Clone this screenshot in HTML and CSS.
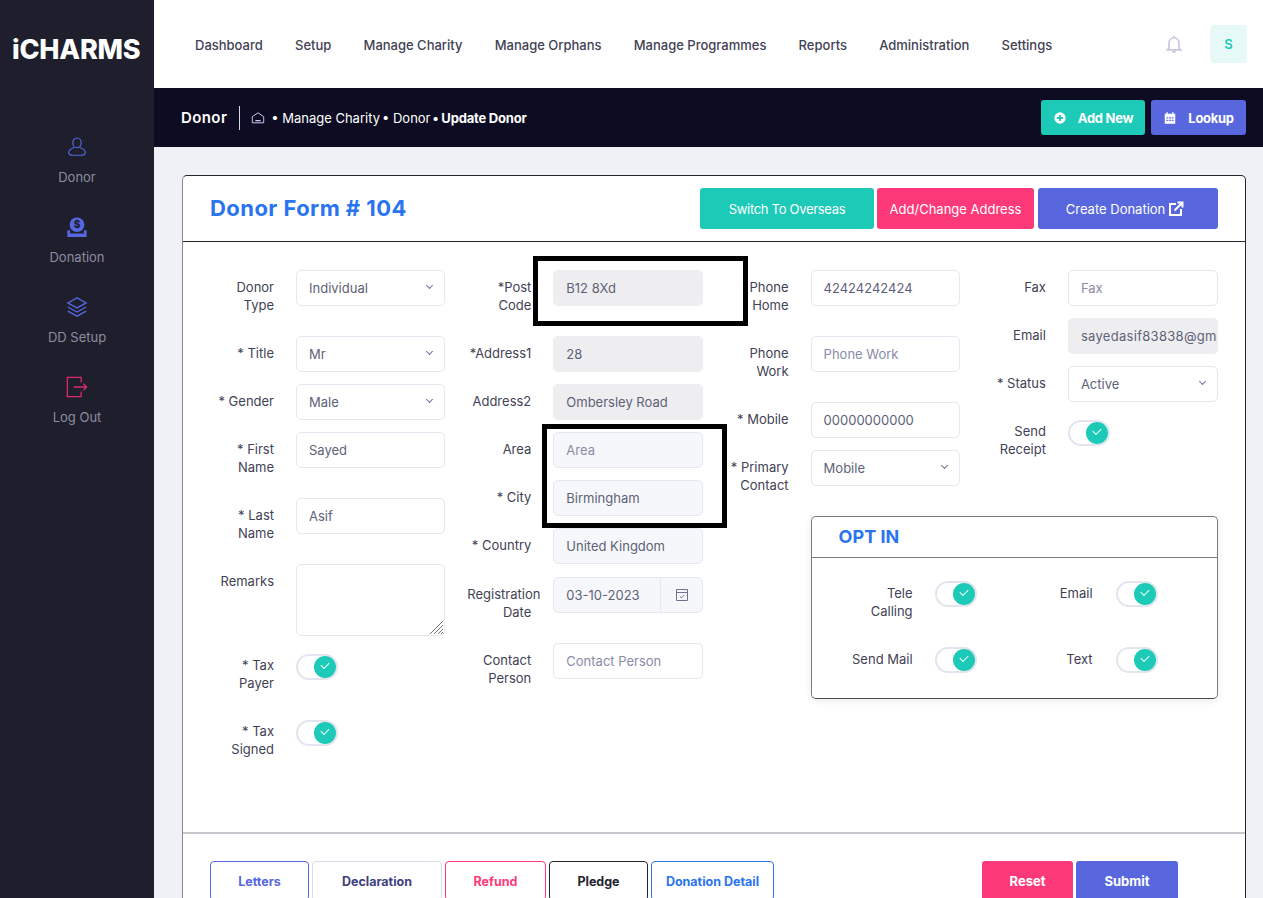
FILE: index.html
```html
<!DOCTYPE html>
<html lang="en">
<head>
  <meta charset="UTF-8" />
  <meta name="viewport" content="width=device-width, initial-scale=1.0" />
  <title>Donor Form</title>
  <link rel="stylesheet" href="styles.css">
</head>
<body>
  <aside class="sidebar">
    <div class="logo">iCHARMS</div>
    <nav class="side-nav">
      <a class="side-item">
        <svg class="side-icon" viewBox="0 0 24 24" fill="none" stroke="#5468e0" stroke-width="1.3"><ellipse cx="12" cy="7.5" rx="4.6" ry="5.3"/><path d="M8.6 12.5C5 14 3 15.6 3 18c0 2.2 2.5 3 4.5 3h9c2 0 4.5-.8 4.5-3 0-2.4-2-4-5.600-5.500"/></svg>
        <span>Donor</span>
      </a>
      <a class="side-item">
        <svg class="side-icon" viewBox="0 0 24 24"><circle cx="12" cy="9.500" r="8" fill="#5468e0"/><path d="M1.500 15.500h3v3.500h15v-3.500h3V23h-21z" fill="#5468e0"/><text x="12" y="13.500" text-anchor="middle" class="dollar">$</text></svg>
        <span>Donation</span>
      </a>
      <a class="side-item">
        <svg class="side-icon" viewBox="0 0 24 24" fill="none" stroke="#5468e0" stroke-width="1.400"><path d="M12 2l10 5.500-10 5.500L2 7.500z"/><path d="M2 12l10 5.500L22 12"/><path d="M2 16.500L12 22l10-5.500"/></svg>
        <span>DD Setup</span>
      </a>
      <a class="side-item">
        <svg class="side-icon" viewBox="0 0 24 24" fill="none" stroke="#d92d6b" stroke-width="1.400"><path d="M16.500 7V1.500H1.500v21h15V17"/><path d="M8.500 12h14M19 8.500l3.500 3.500-3.500 3.500"/></svg>
        <span>Log Out</span>
      </a>
    </nav>
  </aside>

  <div class="page">
    <header class="topbar">
      <nav class="top-nav">
        <a>Dashboard</a>
        <a>Setup</a>
        <a>Manage Charity</a>
        <a>Manage Orphans</a>
        <a>Manage Programmes</a>
        <a>Reports</a>
        <a>Administration</a>
        <a>Settings</a>
      </nav>
      <div class="top-right">
        <svg class="bell" viewBox="0 0 24 24" fill="none" stroke="#c8c8e0" stroke-width="2"><path d="M6 17V10.500a6 6 0 0 1 12 0V17l2 2H4z"/><path d="M10 21.500h4M12 2v2"/></svg>
        <div class="avatar">S</div>
      </div>
    </header>

    <div class="subbar">
      <div class="crumbs">
        <strong class="crumb-title">Donor</strong>
        <svg class="home" viewBox="0 0 16 16" fill="none" stroke="#c9cdf0" stroke-width="1.100"><path d="M1.500 6.500L8 2l6.500 4.500v7h-13z"/><path d="M5 11h6" stroke-width="1.500"/></svg>
        <span class="crumb">• Manage Charity</span>
        <span class="crumb">• Donor</span>
        <span class="crumb crumb-now">• Update Donor</span>
      </div>
      <div class="sub-actions">
        <button class="btn btn-teal btn-sm">
          <svg class="btn-icon" viewBox="0 0 16 16"><circle cx="8" cy="8" r="6.500" fill="#fff"/><path d="M8 4.500v7M4.500 8h7" stroke="#1dc9b7" stroke-width="2.200"/></svg>
          Add New
        </button>
        <button class="btn btn-blue btn-sm">
          <svg class="btn-icon" viewBox="0 0 16 16" fill="#fff"><path d="M2 3h2V1.500h1.500V3h5V1.500H12V3h2v11.500H2z"/><path d="M4 7h2v1.500H4zM7 7h2v1.500H7zM10 7h2v1.500h-2zM4 10h2v1.500H4zM7 10h2v1.500H7zM10 10h2v1.500h-2z" fill="#5867dd"/></svg>
          Lookup
        </button>
      </div>
    </div>

    <main class="content">
      <section class="card">
        <div class="card-head">
          <h2>Donor Form # 104</h2>
          <div class="head-actions">
            <button class="btn btn-teal btn-head btn-switch">Switch To Overseas</button>
            <button class="btn btn-pink btn-head btn-addr">Add/Change Address</button>
            <button class="btn btn-blue btn-head btn-create">
              Create Donation
              <svg class="ext" viewBox="0 0 16 16" fill="none" stroke="#fff" stroke-width="2"><path d="M8 3H2v11h11V8"/><path d="M6.500 9.500L14 2M9.500 1.500h5v5"/></svg>
            </button>
          </div>
        </div>

        <div class="card-body">
          <div class="col col-a">
            <div class="row"><label>Donor Type</label><div class="ctl select">Individual</div></div>
            <div class="row"><label>* Title</label><div class="ctl select">Mr</div></div>
            <div class="row"><label>* Gender</label><div class="ctl select">Male</div></div>
            <div class="row"><label>* First Name</label><div class="ctl">Sayed</div></div>
            <div class="row"><label>* Last Name</label><div class="ctl">Asif</div></div>
            <div class="row"><label>Remarks</label><div class="ctl area"><svg class="grip" viewBox="0 0 14 14" stroke="#777" stroke-width="1"><path d="M1 14L14 1M5 14l9-9M9 14l5-5M12 14l2-2"/></svg></div></div>
            <div class="row"><label>* Tax Payer</label><span class="toggle"></span></div>
            <div class="row"><label>* Tax Signed</label><span class="toggle"></span></div>
          </div>

          <div class="col col-b">
            <div class="row"><label>*Post Code</label><div class="ctl locked">B12 8Xd</div></div>
            <div class="row"><label>*Address1</label><div class="ctl locked">28</div></div>
            <div class="row"><label>Address2</label><div class="ctl locked">Ombersley Road</div></div>
            <div class="row"><label>Area</label><div class="ctl soft empty">Area</div></div>
            <div class="row"><label>* City</label><div class="ctl soft">Birmingham</div></div>
            <div class="row"><label>* Country</label><div class="ctl soft">United Kingdom</div></div>
            <div class="row row-date"><label>Registration Date</label>
              <div class="ctl soft date"><span class="date-val">03-10-2023</span><span class="date-btn"><svg viewBox="0 0 14 14" fill="none" stroke="#6c7293" stroke-width="1"><path d="M1.500 1.500h11v11h-11zM1.500 4.500h11"/><path d="M4.800 8.200l1.700 1.600 2.800-2.800"/></svg></span></div>
            </div>
            <div class="row"><label>Contact Person</label><div class="ctl empty">Contact Person</div></div>
          </div>

          <div class="col col-c">
            <div class="row"><label>Phone Home</label><div class="ctl">42424242424</div></div>
            <div class="row"><label>Phone Work</label><div class="ctl empty">Phone Work</div></div>
            <div class="row"><label>* Mobile</label><div class="ctl">00000000000</div></div>
            <div class="row"><label>* Primary Contact</label><div class="ctl select">Mobile</div></div>
          </div>

          <div class="col col-d">
            <div class="row"><label>Fax</label><div class="ctl empty">Fax</div></div>
            <div class="row"><label>Email</label><div class="ctl locked clip">sayedasif83838@gmail.com</div></div>
            <div class="row"><label>* Status</label><div class="ctl select">Active</div></div>
            <div class="row"><label>Send Receipt</label><span class="toggle"></span></div>
          </div>

          <div class="optin">
            <div class="optin-head">OPT IN</div>
            <div class="optin-body">
              <div class="opt"><label>Tele Calling</label><span class="toggle"></span></div>
              <div class="opt"><label>Email</label><span class="toggle"></span></div>
              <div class="opt"><label>Send Mail</label><span class="toggle"></span></div>
              <div class="opt"><label>Text</label><span class="toggle"></span></div>
            </div>
          </div>
        </div>

        <div class="card-foot">
          <div class="tabs">
            <button class="tab tab-blue">Letters</button>
            <button class="tab tab-navy">Declaration</button>
            <button class="tab tab-pink">Refund</button>
            <button class="tab tab-dark">Pledge</button>
            <button class="tab tab-sky">Donation Detail</button>
          </div>
          <div class="foot-actions">
            <button class="btn btn-pink btn-foot">Reset</button>
            <button class="btn btn-blue btn-foot btn-submit">Submit</button>
          </div>
        </div>
      </section>
    </main>
  </div>

  <div class="mark mark-post"></div>
  <div class="mark mark-city"></div>
</body>
</html>
```

FILE: styles.css
```css
html, body {
  height: 100%;
  margin: 0;
  overflow: hidden;
}
body {
  display: flex;
  font-family: Inter, "Noto Sans", Arial, sans-serif;
  font-size: 13px;
  color: #3f4254;
  background: #f0f1f7;
}
button {
  font-family: inherit;
}

/* sidebar */
.sidebar {
  width: 154px;
  flex: none;
  background: #1e1e2d;
}
.logo {
  height: 88px;
  box-sizing: border-box;
  padding: 29px 0 0 12px;
  color: #fff;
  font-size: 27px;
  line-height: 42px;
  font-weight: 800;
  letter-spacing: -0.2px;
}
.side-nav {
  display: flex;
  flex-direction: column;
  padding-top: 47px;
}
.side-item {
  height: 80px;
  display: flex;
  flex-direction: column;
  align-items: center;
  color: #8d8d9f;
  font-size: 13px;
}
.side-icon {
  width: 22px;
  height: 24px;
  margin-bottom: 10px;
}
.dollar {
  font-family: Inter, sans-serif;
  font-size: 11px;
  font-weight: 800;
  fill: #1e1e2d;
}

/* top */
.page {
  flex: 1;
  min-width: 0;
  display: flex;
  flex-direction: column;
}
.topbar {
  height: 88px;
  flex: none;
  background: #fff;
  display: flex;
  align-items: center;
  justify-content: space-between;
  padding: 0 16px 0 41px;
}
.top-nav {
  display: flex;
  gap: 32.200px;
  font-weight: 500;
  color: #3f4254;
  margin-top: 1px;
}
.top-right {
  display: flex;
  align-items: center;
  gap: 26px;
}
.bell {
  width: 20px;
  height: 20px;
}
.avatar {
  width: 37px;
  height: 38px;
  border-radius: 4px;
  background: #e6f9f6;
  color: #1dc9b7;
  font-weight: 600;
  font-size: 13px;
  display: flex;
  align-items: center;
  justify-content: center;
}
.subbar {
  height: 59px;
  flex: none;
  background: #0d0c22;
  display: flex;
  align-items: center;
  justify-content: space-between;
  padding: 0 17px 0 27px;
  color: #fff;
}
.crumbs {
  display: flex;
  align-items: center;
  gap: 2px;
}
.crumb-title {
  font-size: 15px;
  font-weight: 600;
  letter-spacing: 0.4px;
  padding-right: 12px;
  line-height: 24px;
  border-right: 1px solid #d8d8e0;
  margin-right: 9px;
}
.home {
  width: 14px;
  height: 14px;
  margin-right: 4px;
}
.crumb-now {
  font-weight: 700;
  letter-spacing: -0.2px;
}
.sub-actions {
  display: flex;
  gap: 6px;
}

/* buttons */
.btn {
  border: 0;
  border-radius: 3px;
  color: #fff;
  font-size: 13px;
  display: flex;
  align-items: center;
  justify-content: center;
}
.btn-teal { background: #1dc9b7; }
.btn-blue { background: #5867dd; }
.btn-pink { background: #fd397a; }
.btn-sm {
  height: 35px;
  font-weight: 700;
  letter-spacing: -0.3px;
  gap: 11px;
}
.btn-sm:first-child { width: 104px; }
.btn-sm:last-child { width: 95px; }
.btn-icon {
  width: 14px;
  height: 14px;
}

/* card */
.content {
  flex: 1;
  min-height: 0;
  padding: 28px 17px 0 28px;
}
.card {
  background: #fff;
  border: 1px solid #24242f;
  border-left-color: #8a8a92;
  border-radius: 5px;
  height: 800px;
  box-sizing: border-box;
}
.card-head {
  height: 66px;
  box-sizing: border-box;
  border-bottom: 1px solid #24242f;
  display: flex;
  align-items: center;
  justify-content: space-between;
  padding: 0 27px;
}
.card-head h2 {
  margin: 0 0 2px;
  font-size: 22px;
  font-weight: 700;
  letter-spacing: 0.45px;
  color: #2a74f0;
}
.head-actions {
  display: flex;
  gap: 3px;
}
.btn-head {
  height: 41px;
  width: 174px;
  font-weight: 400;
}
.btn-switch { letter-spacing: -0.3px; }
.btn-addr {
  width: 157px;
  margin-right: 1px;
}
.btn-create {
  width: 180px;
  gap: 3px;
  padding-right: 12px;
}
.ext {
  width: 16px;
  height: 16px;
}

/* form */
.card-body {
  height: 590px;
  box-sizing: border-box;
  padding: 28px 0 0 27px;
  display: grid;
  grid-template-columns: 257.300px 257.300px 257.300px 257.300px;
  grid-template-rows: 246px auto;
  align-items: start;
}
.col-a, .col-b {
  grid-row: 1 / span 2;
}
.row {
  display: flex;
  align-items: flex-start;
  margin-bottom: 12px;
}
.row-date {
  margin-top: 13px;
}
.row label {
  width: 64px;
  margin-right: 22px;
  flex: none;
  text-align: right;
  line-height: 18px;
  padding: 8px 0 10px;
  color: #3f4254;
}
.ctl {
  width: 150px;
  height: 36px;
  box-sizing: border-box;
  border: 1px solid #e6e7f1;
  border-radius: 5px;
  background: #fff;
  padding: 0 12px;
  line-height: 34px;
  color: #5e6278;
  white-space: nowrap;
}
.col-a .ctl, .col-c .ctl {
  width: 149px;
}
.locked {
  background: #eeeef0;
  border-color: #eeeef0;
}
.soft { background: #f6f7fa; }
.empty { color: #8a8ca6; }
.clip {
  overflow: hidden;
  padding-right: 0;
  letter-spacing: 0.3px;
}
.select {
  position: relative;
}
.select::after {
  content: "";
  position: absolute;
  right: 12px;
  top: 12px;
  width: 4px;
  height: 4px;
  border-right: 1.500px solid #6c7293;
  border-bottom: 1.500px solid #6c7293;
  transform: rotate(45deg);
}
.area {
  height: 72px;
  position: relative;
}
.grip {
  position: absolute;
  right: 1px;
  bottom: 1px;
  width: 14px;
  height: 14px;
}
.date {
  display: flex;
  padding: 0;
}
.date-val {
  flex: 1;
  padding-left: 12px;
}
.date-btn {
  width: 41px;
  border-left: 1px solid #e6e7f1;
  display: flex;
  align-items: center;
  justify-content: center;
}
.date-btn svg {
  width: 14px;
  height: 14px;
}

/* toggle */
.toggle {
  width: 42px;
  height: 26px;
  box-sizing: border-box;
  border: 2px solid #e2e5ee;
  border-radius: 13px;
  background: #fff;
  margin-top: 6px;
  position: relative;
  flex: none;
}
.toggle::before {
  content: "";
  position: absolute;
  right: 0;
  top: 0;
  width: 22px;
  height: 22px;
  border-radius: 50%;
  background: #1dc9b7;
}
.toggle::after {
  content: "";
  position: absolute;
  right: 7px;
  top: 6px;
  width: 7px;
  height: 4px;
  border-left: 1px solid #fff;
  border-bottom: 1px solid #fff;
  transform: rotate(-45deg);
}

/* opt in box */
.optin {
  grid-column: 3 / span 2;
  width: 407px;
  height: 183px;
  box-sizing: border-box;
  margin-left: 86px;
  border: 1px solid #7b7b85;
  border-bottom-color: #4a4a55;
  border-radius: 5px;
  box-shadow: 0 2px 8px rgba(0,0,0,0.08);
}
.optin-head {
  height: 41px;
  box-sizing: border-box;
  border-bottom: 1px solid #7b7b85;
  padding-left: 27px;
  font-size: 18px;
  line-height: 40px;
  font-weight: 700;
  color: #2a74f0;
}
.optin-body {
  display: grid;
  grid-template-columns: 181px 180px;
  grid-auto-rows: 66px;
  padding-top: 19px;
}
.opt {
  display: flex;
  align-items: flex-start;
  gap: 22px;
}
.opt label {
  width: 101px;
  box-sizing: border-box;
  flex: none;
  text-align: right;
  line-height: 18px;
  padding-top: 7px;
  padding-left: 37px;
}
.opt:nth-child(even) label { padding-right: 1px; }
.opt .toggle { margin-top: 4px; }

/* bottom */
.card-foot {
  border-top: 2px solid #c6c6cc;
  display: flex;
  justify-content: space-between;
  padding: 27px 67px 0 27px;
}
.tabs {
  display: flex;
  gap: 3px;
}
.tab {
  height: 40px;
  box-sizing: border-box;
  background: #fff;
  border: 1px solid;
  border-radius: 4px;
  font-size: 12.500px;
  font-weight: 700;
}
.tab-blue { width: 99px; border-color: #5867dd; color: #5867dd; }
.tab-navy { width: 130px; border-color: #dcdce8; color: #403f7d; }
.tab-pink { width: 101px; border-color: #fd397a; color: #fd397a; }
.tab-dark { width: 99px; border-color: #24242f; color: #24242f; }
.tab-sky { width: 123px; border-color: #2a74f0; color: #2a74f0; }
.foot-actions {
  display: flex;
  gap: 3px;
}
.btn-foot {
  width: 91px;
  height: 40px;
  font-weight: 700;
}
.btn-submit { width: 102px; }

/* black boxes drawn over the screenshot */
.mark {
  position: absolute;
  box-sizing: border-box;
  border: 5px solid #000;
}
.mark-post {
  left: 533px;
  top: 256px;
  width: 215px;
  height: 70px;
}
.mark-city {
  left: 542px;
  top: 424px;
  width: 185px;
  height: 104px;
}
```
